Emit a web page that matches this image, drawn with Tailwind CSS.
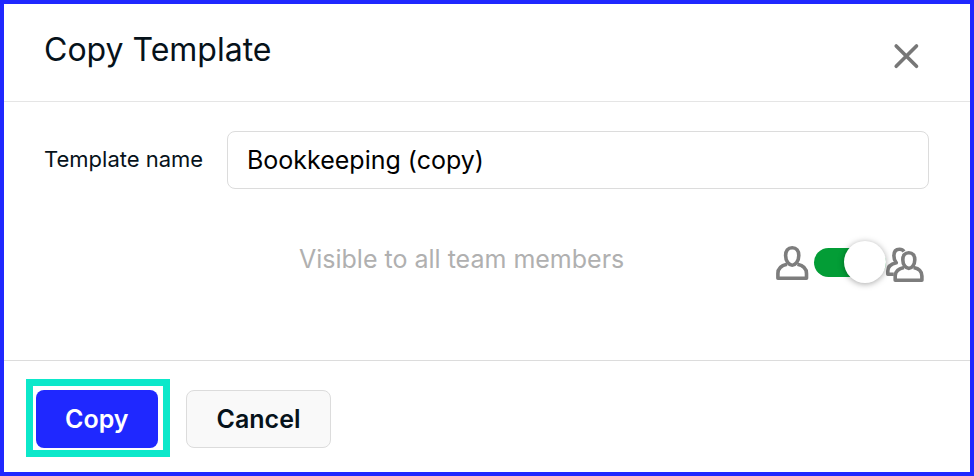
<!DOCTYPE html>
<html lang="en">
<head>
<meta charset="utf-8">
<meta name="viewport" content="width=device-width, initial-scale=1">
<title>Copy Template</title>
<script src="https://cdn.jsdelivr.net/npm/@tailwindcss/browser@4"></script>
</head>
<body class="bg-white font-['Inter',sans-serif] text-[#06121a]">
<form class="flex min-h-screen flex-col border-4 border-[#1f28ff]">
  <header class="flex items-center justify-between border-b border-[#e5e5e5] pt-[9px] pr-12 pb-[3px] pl-10">
    <h1 class="pb-3 text-[32px] leading-[73px]">Copy Template</h1>
    <button type="button" aria-label="Close" class="flex size-8 items-center justify-center text-[#777]">
      <svg class="size-7" viewBox="0 0 28 28" fill="none" stroke="currentColor" stroke-width="3.6" stroke-linecap="round"><path d="M4.200 4 24.500 24.300M24.500 4 4.200 24.300"/></svg>
    </button>
  </header>
  <main class="flex-1 pt-[29px] pr-[41px] pl-10">
    <div class="flex items-center">
      <label for="name" class="w-[183px] shrink-0 pb-[2px] text-[22px] leading-7">Template name</label>
      <input id="name" type="text" value="Bookkeeping (copy)" class="h-[58px] min-w-0 flex-1 rounded-lg border border-[#dcdcdc] px-[19px] text-[25px] text-black outline-none">
    </div>
    <div class="mt-[50px] flex items-center justify-between pr-[5px] pl-[255px]">
      <label for="visible" class="pb-[6px] text-[25px] leading-10 text-[#b0b0b0]">Visible to all team members</label>
      <div class="flex items-center">
        <svg class="h-10 w-[34px]" viewBox="0 0 34 40" fill="none" stroke="#7d7d7d" stroke-width="3.6" stroke-linejoin="round"><path d="M16.200 5.800c-4.400 0-6.600 3.200-6.600 7.700 0 2.800.8 5.400 2.200 7.200 1.300 1.700 2.800 2.500 4.400 2.500s3.100-.8 4.400-2.500c1.400-1.800 2.200-4.400 2.200-7.200 0-4.500-2.200-7.700-6.600-7.700Z"/><path d="M11 22.200C5.600 23.300 1.900 26.300 1.900 31.500v4.700h28.600v-4.700c0-5.200-3.700-8.200-9.100-9.300"/></svg>
        <span class="relative ml-1 flex h-[42px] w-[72px] items-center">
          <input id="visible" type="checkbox" role="switch" checked class="h-[29px] w-full appearance-none rounded-full bg-[#039d36]">
          <span class="pointer-events-none absolute right-0 size-[42px] rounded-full bg-white shadow-[0_1px_6px_rgba(0,0,0,0.35)]"></span>
        </span>
        <svg class="h-10 w-[38px]" viewBox="0 0 38 40" fill="none" stroke="#7d7d7d" stroke-width="3.6" stroke-linejoin="round"><path d="M18 9.500C17 8 15.400 7.300 13.500 7.300c-3.800 0-5.600 2.700-5.600 6.500 0 2.800.8 5.300 2.300 7C4.800 22 1.800 24.800 1.800 29v3.200h6"/><path d="M22.800 10.800c-4 0-6 2.900-6 6.900 0 2.500.7 4.800 2 6.500 1.200 1.500 2.500 2.200 4 2.200s2.800-.7 4-2.200c1.300-1.700 2-4 2-6.500 0-4-2-6.900-6-6.900Z"/><path d="M18 25.500c-5.200 1-8.800 3.800-8.800 8.500v4.200h26.700V34c0-4.700-3.200-7.500-8.300-8.500"/></svg>
      </div>
    </div>
  </main>
  <footer class="flex items-end gap-4 border-t border-[#dcdcdc] px-[22px] pt-[18px] pb-[15px]">
    <div class="border-[7px] border-[#0ce8ca] pt-1 pr-[5px] pb-[2px] pl-[3px]">
      <button type="submit" class="block h-[58px] rounded-lg bg-[#1f28ff] px-[29px] pt-[2px] text-[25px] font-semibold text-white">Copy</button>
    </div>
    <button type="button" class="mb-[9px] h-[58px] rounded-lg border border-[#dcdcdc] bg-[#f9f9f9] px-[30px] pt-[2px] text-[25px] font-semibold">Cancel</button>
  </footer>
</form>
</body>
</html>
